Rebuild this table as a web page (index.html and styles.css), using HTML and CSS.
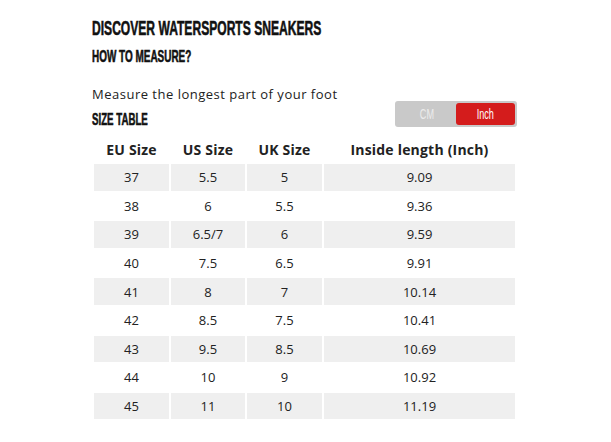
FILE: index.html
```html
<!DOCTYPE html>
<html>
<head>
<meta charset="utf-8">
<link rel="stylesheet" href="styles.css">
</head>
<body>
<div class="page">
  <h1 class="title"><span>DISCOVER WATERSPORTS SNEAKERS</span></h1>
  <h2 class="subtitle"><span>HOW TO MEASURE?</span></h2>
  <div class="measure-row">
    <div class="measure-left">
      <p class="hint">Measure the longest part of your foot</p>
      <h3 class="table-title"><span>SIZE TABLE</span></h3>
    </div>
    <div class="toggle">
      <div class="seg seg-cm"><span>CM</span></div>
      <div class="seg seg-inch active"><span>Inch</span></div>
    </div>
  </div>
  <table class="sizes">
    <thead>
      <tr><th class="c1">EU Size</th><th class="c2">US Size</th><th class="c3">UK Size</th><th class="c4">Inside length (Inch)</th></tr>
    </thead>
    <tbody>
      <tr class="odd"><td>37</td><td>5.5</td><td>5</td><td>9.09</td></tr>
      <tr><td>38</td><td>6</td><td>5.5</td><td>9.36</td></tr>
      <tr class="odd"><td>39</td><td>6.5/7</td><td>6</td><td>9.59</td></tr>
      <tr><td>40</td><td>7.5</td><td>6.5</td><td>9.91</td></tr>
      <tr class="odd"><td>41</td><td>8</td><td>7</td><td>10.14</td></tr>
      <tr><td>42</td><td>8.5</td><td>7.5</td><td>10.41</td></tr>
      <tr class="odd"><td>43</td><td>9.5</td><td>8.5</td><td>10.69</td></tr>
      <tr><td>44</td><td>10</td><td>9</td><td>10.92</td></tr>
      <tr class="odd"><td>45</td><td>11</td><td>10</td><td>11.19</td></tr>
    </tbody>
  </table>
</div>
</body>
</html>
```
FILE: styles.css
```css
html, body {
  margin: 0;
  padding: 0;
  background: #ffffff;
}
.page {
  width: 425px;
  padding: 17px 0 0 92px;
  font-family: "Open Sans", "Liberation Sans", sans-serif;
  color: #1a1a1a;
}
.title, .subtitle, .table-title {
  margin: 0;
  font-family: "Liberation Sans Narrow", "Liberation Sans", sans-serif;
  font-weight: bold;
  color: #111;
  white-space: nowrap;
  -webkit-text-stroke: 0.6px #111;
}
.title span, .subtitle span, .table-title span, .seg span {
  display: inline-block;
  transform-origin: left center;
}
.title {
  font-size: 21px;
  line-height: 22px;
}
.title span { transform: scaleX(0.575); }
.subtitle {
  margin-top: 9px;
  font-size: 17px;
  line-height: 18px;
}
.subtitle span { transform: scaleX(0.585); }
.measure-row {
  display: flex;
  justify-content: space-between;
  align-items: flex-end;
  margin-top: 20px;
}
.hint {
  margin: 0;
  font-size: 13px;
  line-height: 16px;
  letter-spacing: 0.5px;
  color: #222;
}
.table-title {
  margin-top: 9px;
  font-size: 17px;
  line-height: 18px;
}
.table-title span { transform: scaleX(0.57); }
.toggle {
  width: 122px;
  height: 26px;
  box-sizing: border-box;
  padding: 2px;
  background: #c9c9c9;
  border-radius: 3px;
  display: flex;
  margin-bottom: 2px;
}
.seg {
  flex: 1;
  display: flex;
  align-items: center;
  justify-content: center;
  font-family: "Liberation Sans Narrow", "Liberation Sans", sans-serif;
  font-size: 14px;
  color: #f2f2f2;
  border-radius: 3px;
}
.seg span { transform: scaleX(0.65); transform-origin: center; }
.seg-cm { color: #ececec; }
.seg-inch {
  flex: 0 0 59px;
  background: #d41c1c;
  color: #fff;
}
.sizes {
  margin-left: 0;
  margin-top: 5px;
  border-collapse: separate;
  border-spacing: 2px;
  width: 425px;
  font-size: 13px;
}
.sizes th {
  font-weight: bold;
  font-size: 14px;
  letter-spacing: 0.2px;
  color: #222;
  height: 26px;
  padding: 0;
  text-align: center;
}
.sizes .c1 { width: 75px; }
.sizes .c2 { width: 74px; }
.sizes .c3 { width: 75px; }
.sizes td {
  height: 26.6px;
  padding: 0;
  text-align: center;
  color: #222;
}
.sizes tr.odd td {
  background: #efefef;
}
```
